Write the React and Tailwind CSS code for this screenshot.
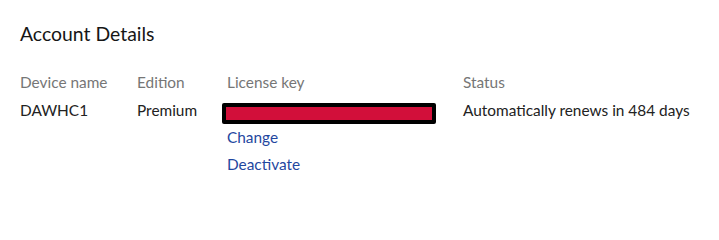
export default function App() {
  return (
    <div className="w-[719px] h-[204px] bg-white pl-5 pt-[22px]" style={{ fontFamily: "Lato, 'Noto Sans', sans-serif" }}>
      <h1 className="text-[19.4px] leading-6 text-[#161616] font-normal">Account Details</h1>
      <div className="mt-[26px] grid grid-cols-[117px_90px_236px_1fr] text-[15.4px] leading-5">
        <div className="text-[#767676]">Device name</div>
        <div className="text-[#767676]">Edition</div>
        <div className="text-[#767676]">License key</div>
        <div className="text-[#767676]">Status</div>
        <div className="mt-2 text-[#222]">DAWHC1</div>
        <div className="mt-2 text-[#222]">Premium</div>
        <div className="mt-2 flex flex-col items-start">
          <div className="-ml-[5px] mt-[3px] w-[214px] h-[21px] bg-black rounded-[2px] p-1">
            <div className="w-full h-full bg-[#d20f3a]" />
          </div>
          <a className="mt-[3px] text-[#1f47a0]">Change</a>
          <a className="mt-[7px] text-[#1f47a0]">Deactivate</a>
        </div>
        <div className="mt-2 text-[#222]">Automatically renews in 484 days</div>
      </div>
    </div>
  );
}
